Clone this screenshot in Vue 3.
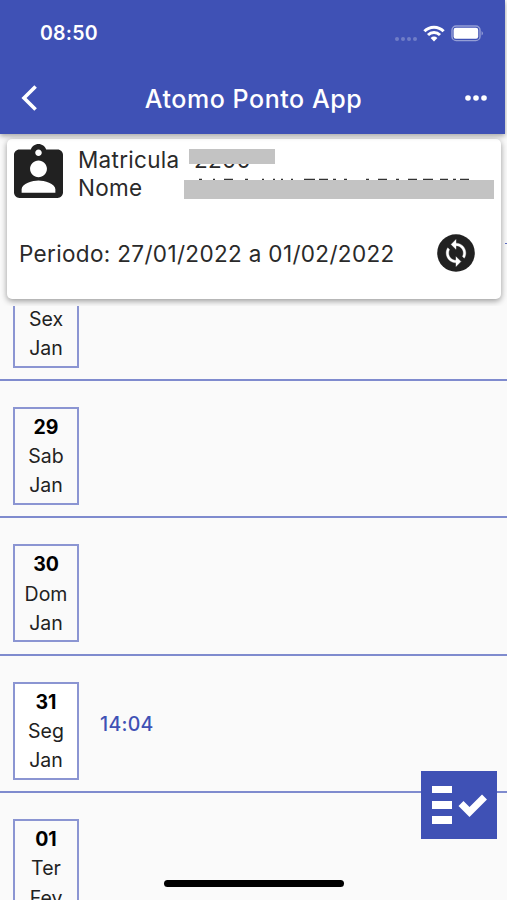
<script setup>
const days = [
  { day: '28', week: 'Sex', month: 'Jan', times: [] },
  { day: '29', week: 'Sab', month: 'Jan', times: [] },
  { day: '30', week: 'Dom', month: 'Jan', times: [] },
  { day: '31', week: 'Seg', month: 'Jan', times: ['14:04'] },
  { day: '01', week: 'Ter', month: 'Fev', times: [] },
];
</script>
<template>
  <div class="screen">
    <header class="header">
      <div class="status">
        <span class="clock">08:50</span>
        <div class="signals">
          <svg class="dots" viewBox="0 0 24 6">
            <circle cx="3" cy="3" r="2" />
            <circle cx="9" cy="3" r="2" />
            <circle cx="15" cy="3" r="2" />
            <circle cx="21" cy="3" r="2" />
          </svg>
          <svg class="wifi" viewBox="0 0 22 17">
            <path d="M1.4 6.2 A13.4 13.4 0 0 1 20.6 6.2" />
            <path d="M5 10 A8.6 8.6 0 0 1 17 10" />
            <path class="fill" d="M7.6 13 A5.2 5.2 0 0 1 14.4 13 L11 16.6 Z" />
          </svg>
          <svg class="battery" viewBox="0 0 34 17">
            <rect class="case" x="1" y="1" width="28" height="14.6" rx="4.2" />
            <rect x="2.6" y="2.8" width="24.6" height="11" rx="2.2" />
            <path class="tip" d="M30.6 6 q2.6 2.3 0 4.6 z" />
          </svg>
        </div>
      </div>
      <div class="toolbar">
        <svg class="back" viewBox="0 0 18 28">
          <path d="M15.6 2.4 L4 14 L15.6 25.6" />
        </svg>
        <h1 class="title">Atomo Ponto App</h1>
        <svg class="more" viewBox="0 0 22 6">
          <circle cx="3" cy="3" r="2.8" />
          <circle cx="11" cy="3" r="2.8" />
          <circle cx="19" cy="3" r="2.8" />
        </svg>
      </div>
    </header>

    <section class="card-area">
      <div class="card">
        <div class="person">
          <svg class="badge" viewBox="3 1 18 20" preserveAspectRatio="none">
            <path
              d="M19 3h-4.18C14.4 1.84 13.3 1 12 1c-1.3 0-2.4.84-2.82 2H5c-1.1 0-2 .9-2 2v14c0 1.1.9 2 2 2h14c1.1 0 2-.9 2-2V5c0-1.1-.9-2-2-2zm-7 0c.66 0 1.2.54 1.2 1.2s-.54 1.2-1.2 1.2-1.2-.54-1.2-1.2S11.34 3 12 3zm0 4.1c1.7 0 3.1 1.4 3.1 3.1s-1.4 3.1-3.1 3.1-3.1-1.4-3.1-3.1 1.4-3.1 3.1-3.1zm6.2 12H5.8v-1.3c0-2.2 4.1-3.3 6.2-3.3s6.2 1.1 6.2 3.3z"
            />
          </svg>
          <div class="fields">
            <div class="field">
              <span class="label">Matricula</span>
              <span class="masked number">2200</span>
            </div>
            <div class="field">
              <span class="label">Nome</span>
              <span class="masked name">
                <svg class="marks" viewBox="0 0 310 3">
                  <path
                    d="M15 1.5h3M29 1.5h2M40 1.5h9M61 1.5h3M78 1.5h2M89 1.5h2M97 1.5h2M107 1.5h2M120 1.5h11M135 1.5h9M149 1.5h3M160 1.5h3M182 1.5h3M194 1.5h9M212 1.5h3M224 1.5h9M239 1.5h10M256 1.5h8M269 1.5h3M276 1.5h9"
                  />
                </svg>
              </span>
            </div>
          </div>
        </div>
        <div class="period">
          <span>Periodo: 27/01/2022 a 01/02/2022</span>
          <svg class="sync" viewBox="0 0 38 38">
            <circle cx="19" cy="19" r="18.8" />
            <path
              transform="translate(4.3 4.3) scale(1.225)"
              d="M12 4V1L8 5l4 4V6c3.31 0 6 2.69 6 6 0 1.01-.25 1.97-.7 2.8l1.46 1.46C19.54 15.03 20 13.57 20 12c0-4.42-3.58-8-8-8zm0 14c-3.31 0-6-2.69-6-6 0-1.01.25-1.97.7-2.8L5.24 7.74C4.46 8.97 4 10.43 4 12c0 4.42 3.58 8 8 8v3l4-4-4-4v3z"
            />
          </svg>
        </div>
      </div>
      <div class="edge-mark"></div>
    </section>

    <main class="list">
      <div class="rows">
        <div v-for="item in days" :key="item.day" class="row">
          <div class="date" :class="{ filled: item.times.length }">
            <strong>{{ item.day }}</strong>
            <span>{{ item.week }}</span>
            <span>{{ item.month }}</span>
          </div>
          <span v-for="time in item.times" :key="time" class="time">{{ time }}</span>
        </div>
      </div>
    </main>

    <button class="register">
      <svg viewBox="0 0 76 68">
        <path d="M11 15h20v7H11zM11 30h20v8H11zM11 45h20v8H11z" />
        <path class="check" d="M40 32.5 L48.5 41 L63.5 26" />
      </svg>
    </button>
    <div class="home-bar"></div>
  </div>
</template>

<style>
body {
  background-color: #fafafa;
}
</style>

<style scoped>
.screen {
  position: relative;
  display: flex;
  flex-direction: column;
  height: 900px;
  overflow: hidden;
  background-color: #fafafa;
  color: #2a2a2a;
  font-family: Inter, sans-serif;
}

.header {
  position: relative;
  z-index: 2;
  flex: none;
  box-sizing: border-box;
  width: 505px;
  height: 134px;
  background-color: #3f51b5;
  box-shadow: 0 2px 5px rgba(0, 0, 0, 0.35);
  color: white;
}
.status {
  display: flex;
  justify-content: space-between;
  align-items: center;
  height: 66px;
  padding: 0 20px 0 40px;
}
.clock {
  font-size: 19.5px;
  font-weight: 600;
  letter-spacing: 0.2px;
}
.signals {
  display: flex;
  align-items: center;
  fill: white;
}
.dots {
  width: 24px;
  height: 6px;
  margin: 11px 5px 0 0;
  opacity: 0.25;
}
.wifi {
  width: 22px;
  height: 17px;
  margin-right: 6px;
  fill: none;
  stroke: white;
  stroke-width: 3;
}
.wifi .fill {
  fill: white;
  stroke: none;
}
.battery {
  width: 34px;
  height: 17px;
}
.battery .case {
  fill: none;
  stroke: rgba(255, 255, 255, 0.45);
  stroke-width: 1.4;
}
.battery .tip {
  opacity: 0.5;
}
.toolbar {
  display: flex;
  justify-content: space-between;
  align-items: center;
  height: 64px;
  padding: 0 18px 0 20px;
}
.back {
  width: 18px;
  height: 28px;
  fill: none;
  stroke: white;
  stroke-width: 3.6;
}
.title {
  margin: 1px 0 0 4px;
  font-size: 25px;
  font-weight: 500;
  letter-spacing: 0.55px;
}
.more {
  width: 22px;
  height: 6px;
  fill: white;
}

.card-area {
  position: relative;
  z-index: 1;
  flex: none;
  box-sizing: border-box;
  height: 172px;
  padding: 5px 6px 7px 7px;
  overflow: hidden;
}
.card {
  box-sizing: border-box;
  height: 160px;
  padding: 5px 7px 0;
  border-radius: 5px;
  background-color: white;
  box-shadow: 0 2px 6px rgba(0, 0, 0, 0.4);
}
.edge-mark {
  position: absolute;
  right: 0;
  top: 109px;
  width: 2px;
  height: 1px;
  background-color: #5c6bc0;
}
.person {
  display: flex;
  height: 56px;
}
.badge {
  width: 49px;
  height: 54px;
  fill: #212121;
}
.fields {
  margin: 3px 0 0 15px;
}
.field {
  display: flex;
  height: 27px;
  line-height: 27px;
  font-size: 22.5px;
  letter-spacing: 0.3px;
}
.label {
  width: 106px;
}
.masked {
  position: relative;
}
.masked::before {
  content: '';
  position: absolute;
  background-color: #c3c3c3;
}
.number {
  padding-left: 10px;
}
.number::before {
  left: 5px;
  top: 3px;
  width: 86px;
  height: 15px;
}
.field:first-child {
  position: relative;
  top: -1px;
}
.name::before {
  left: 0;
  top: 6px;
  width: 310px;
  height: 19px;
}
.marks {
  display: block;
  width: 310px;
  height: 3px;
  margin-top: 4px;
  fill: none;
  stroke: #333;
  stroke-width: 1.5;
}
.period {
  display: flex;
  justify-content: space-between;
  align-items: center;
  height: 106px;
  padding: 0 19px 0 5px;
  font-size: 22.5px;
  letter-spacing: 0.34px;
}
.sync {
  width: 38px;
  height: 38px;
  fill: #212121;
}
.sync path {
  fill: white;
  stroke: white;
  stroke-width: 0.3;
}

.list {
  flex: 1;
  min-height: 0;
  overflow: hidden;
}
.rows {
  margin-top: -62.4px;
}
.row {
  display: flex;
  align-items: flex-start;
  box-sizing: border-box;
  height: 137.4px;
  padding: 26px 0 0 13px;
  border-bottom: 2px solid #7f8bce;
}
.date {
  display: flex;
  flex-direction: column;
  box-sizing: border-box;
  width: 66px;
  height: 98px;
  padding-top: 4px;
  border: 2px solid #8b95d2;
  color: #222;
  text-align: center;
  line-height: 29.2px;
  font-size: 19.5px;
}
.date strong {
  color: #000;
  font-weight: 700;
}
.filled {
  background-color: white;
}
.time {
  margin: 30px 0 0 21px;
  line-height: 24px;
  color: #3f51b5;
  font-size: 19.5px;
  font-weight: 500;
  letter-spacing: 0.3px;
}

.register {
  position: absolute;
  left: 421px;
  top: 771px;
  width: 76px;
  height: 68px;
  padding: 0;
  border: none;
  background-color: #3f51b5;
}
.register svg {
  display: block;
  fill: white;
}
.register .check {
  fill: none;
  stroke: white;
  stroke-width: 7;
}
.home-bar {
  position: absolute;
  left: 164px;
  top: 880px;
  width: 180px;
  height: 7px;
  border-radius: 4px;
  background-color: black;
}
</style>
